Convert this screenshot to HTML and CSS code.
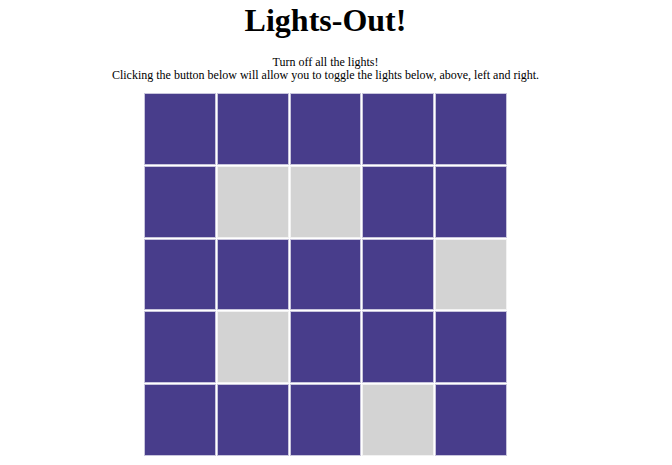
FILE: index.html
```html
<!DOCTYPE html>
<html>
<head>
<meta charset="utf-8">
<title>Lights-Out!</title>
<link rel="stylesheet" href="styles.css">
</head>
<body>
<div class="page">
  <h1 class="title">Lights-Out!</h1>
  <p class="intro">Turn off all the lights!<br>Clicking the button below will allow you to toggle the lights below, above, left and right.</p>
  <div class="board">
    <button class="cell on"></button><button class="cell on"></button><button class="cell on"></button><button class="cell on"></button><button class="cell on"></button>
    <button class="cell on"></button><button class="cell off"></button><button class="cell off"></button><button class="cell on"></button><button class="cell on"></button>
    <button class="cell on"></button><button class="cell on"></button><button class="cell on"></button><button class="cell on"></button><button class="cell off"></button>
    <button class="cell on"></button><button class="cell off"></button><button class="cell on"></button><button class="cell on"></button><button class="cell on"></button>
    <button class="cell on"></button><button class="cell on"></button><button class="cell on"></button><button class="cell off"></button><button class="cell on"></button>
  </div>
</div>
</body>
</html>
```
FILE: styles.css
```css
html, body {
  margin: 0;
  padding: 0;
  background: #ffffff;
}
body {
  font-family: Georgia, "Liberation Serif", serif;
  color: #000;
}
.page {
  width: 635px;
  margin-left: 8px;
  text-align: center;
}
.title {
  margin: 0;
  padding-top: 2px;
  font-size: 32px;
  line-height: 37px;
  font-weight: bold;
}
.intro {
  margin: 17px 0 0;
  font-size: 12px;
  line-height: 13px;
}
.board {
  width: 363px;
  margin: 11px auto 0;
  display: grid;
  grid-template-columns: repeat(5, 1fr);
  grid-auto-rows: 71.8px;
  gap: 1px;
}
.cell {
  margin: 0;
  padding: 0;
  border: 1px solid rgba(255, 255, 255, 0.7);
  cursor: pointer;
}
.cell.on {
  background: #483d8b;
}
.cell.off {
  background: #d3d3d3;
}
```
